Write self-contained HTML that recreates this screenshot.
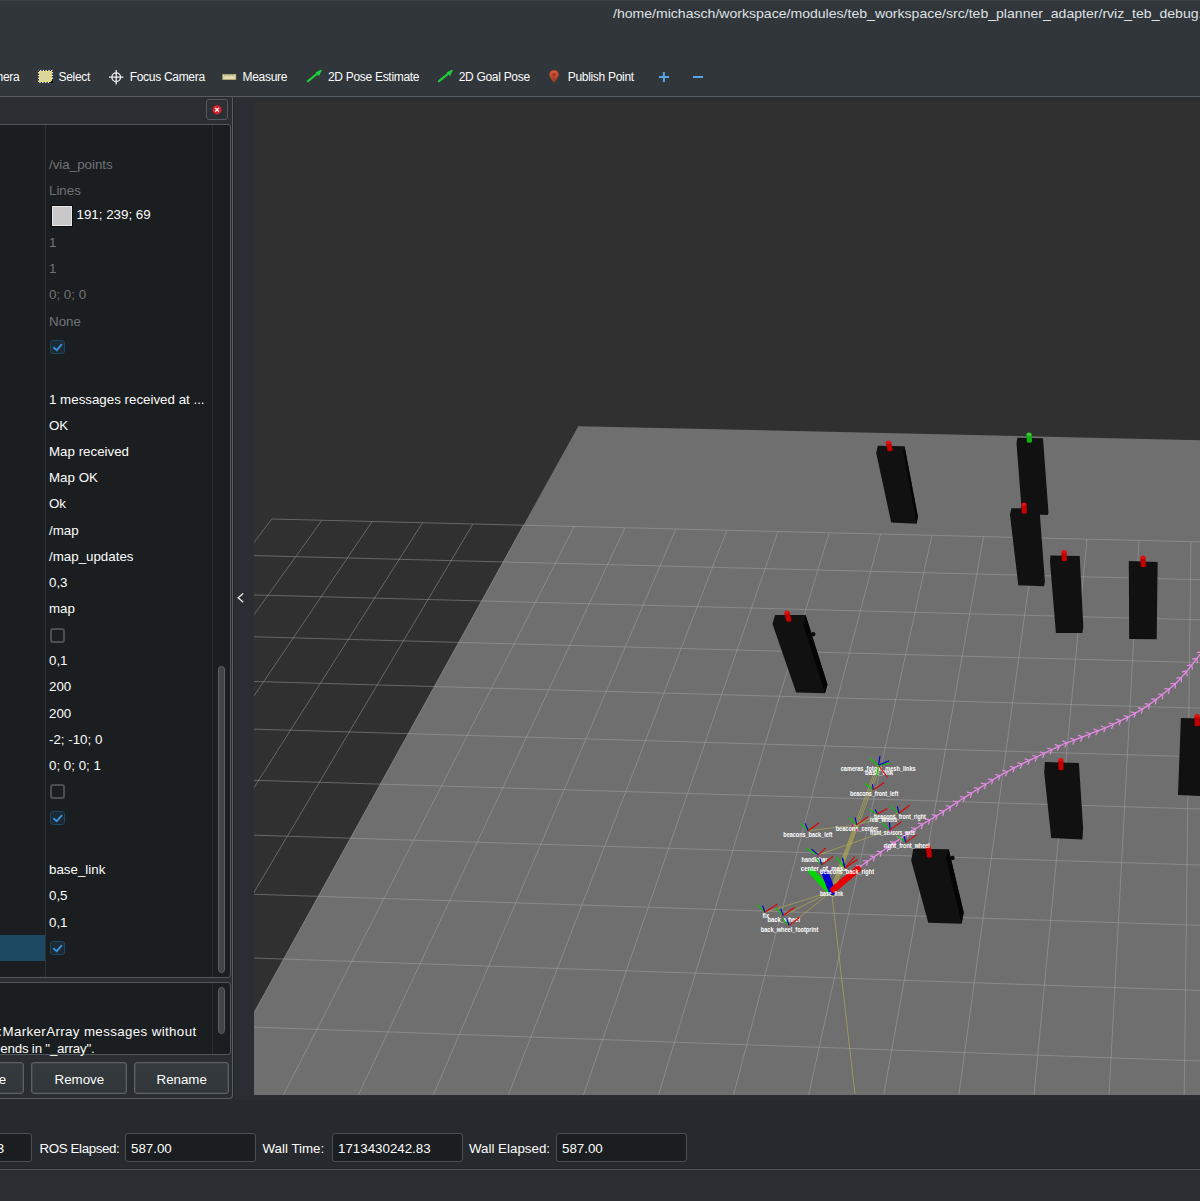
<!DOCTYPE html><html><head><meta charset="utf-8"><style>
*{margin:0;padding:0;box-sizing:border-box}
html,body{width:1200px;height:1201px;overflow:hidden;background:#31363b;font-family:"Liberation Sans", sans-serif;color:#fcfcfc;position:relative}
.a{position:absolute;white-space:nowrap}
</style></head><body><div class="a" style="left:0px;top:0px;width:1200px;height:1px;background:#3c4147"></div>
<div class="a" style="left:613.00px;top:7.75px;font-size:12.2px;line-height:13.63px;color:#dfe1e3;letter-spacing:0px;transform:scaleX(1.154);transform-origin:0 0">/home/michasch/workspace/modules/teb_workspace/src/teb_planner_adapter/rviz_teb_debug.rviz - RViz</div>
<div class="a" style="left:-21.50px;top:70.92px;font-size:12px;line-height:13.40px;color:#fcfcfc;letter-spacing:-0.3px;">Camera</div>
<svg class="a" style="left:37px;top:69px" width="17" height="15"><rect x="1.5" y="1.5" width="14" height="12" fill="#d9d59c"/><rect x="2.6" y="2.6" width="11.8" height="9.8" fill="none" stroke="#ece070" stroke-width="1.1"/><rect x="1.5" y="1.5" width="14" height="12" fill="none" stroke="#e8e8f0" stroke-width="1.1"/><rect x="1.5" y="1.5" width="14" height="12" fill="none" stroke="#141a38" stroke-width="1.1" stroke-dasharray="1.4 1.4"/><path d="M12.5 14L16 14L16 10.5Z" fill="#000"/></svg>
<div class="a" style="left:58.50px;top:70.92px;font-size:12px;line-height:13.40px;color:#fcfcfc;letter-spacing:-0.3px;">Select</div>
<svg class="a" style="left:108px;top:69px" width="17" height="17"><circle cx="8.2" cy="8.2" r="4.3" fill="none" stroke="#f0f0f0" stroke-width="1.3"/><path d="M8.2 1V15.4M1 8.2H15.4" stroke="#f0f0f0" stroke-width="1.3"/></svg>
<div class="a" style="left:129.70px;top:70.92px;font-size:12px;line-height:13.40px;color:#fcfcfc;letter-spacing:-0.3px;">Focus Camera</div>
<svg class="a" style="left:222px;top:73px" width="15" height="8"><rect x="0.8" y="1.5" width="13" height="5" fill="#e6ddb0" stroke="#b8ae80" stroke-width="0.8"/><path d="M3 1.5v2M5 1.5v1.5M7 1.5v2M9 1.5v1.5M11 1.5v2" stroke="#8a8060" stroke-width="0.6"/></svg>
<div class="a" style="left:242.50px;top:70.92px;font-size:12px;line-height:13.40px;color:#fcfcfc;letter-spacing:-0.3px;">Measure</div>
<svg class="a" style="left:306px;top:68px" width="18" height="16"><path d="M2 13.2 L14.5 3" stroke="#1fcf3a" stroke-width="2.2" stroke-linecap="round"/><path d="M15.5 2 L9.5 4.2 L13.2 8.2 Z" fill="#1fcf3a"/></svg>
<svg class="a" style="left:436.7px;top:68px" width="18" height="16"><path d="M2 13.2 L14.5 3" stroke="#1fcf3a" stroke-width="2.2" stroke-linecap="round"/><path d="M15.5 2 L9.5 4.2 L13.2 8.2 Z" fill="#1fcf3a"/></svg>
<div class="a" style="left:328.00px;top:70.92px;font-size:12px;line-height:13.40px;color:#fcfcfc;letter-spacing:-0.3px;">2D Pose Estimate</div>
<div class="a" style="left:458.70px;top:70.92px;font-size:12px;line-height:13.40px;color:#fcfcfc;letter-spacing:-0.3px;">2D Goal Pose</div>
<svg class="a" style="left:548px;top:69px" width="12" height="15"><defs><linearGradient id="pg" x1="0" y1="0" x2="0" y2="1"><stop offset="0" stop-color="#e4583a"/><stop offset="1" stop-color="#8e3a22"/></linearGradient></defs><path d="M6 1.2C3.2 1.2 1.3 3.2 1.3 5.6C1.3 8.6 6 13.8 6 13.8C6 13.8 10.7 8.6 10.7 5.6C10.7 3.2 8.8 1.2 6 1.2Z" fill="url(#pg)"/><circle cx="6" cy="5.4" r="1.5" fill="#8e3a22"/></svg>
<div class="a" style="left:567.70px;top:70.92px;font-size:12px;line-height:13.40px;color:#fcfcfc;letter-spacing:-0.3px;">Publish Point</div>
<svg class="a" style="left:658px;top:71px" width="12" height="12"><path d="M5.9 1v10M1 6h10" stroke="#58a4e8" stroke-width="2"/></svg>
<svg class="a" style="left:692px;top:71px" width="12" height="12"><path d="M1 6h10" stroke="#58a4e8" stroke-width="2"/></svg>
<div class="a" style="left:0px;top:96px;width:1200px;height:1px;background:#575c62"></div>
<div class="a" style="left:0px;top:97px;width:1200px;height:1003px;background:#2a2e32"></div>
<div class="a" style="left:-4px;top:96px;width:237px;height:1003px;border:1px solid #575c61;border-top:none;border-radius:0 3px 4px 4px"></div>
<div class="a" style="left:233px;top:97px;width:1px;height:1001px;background:#23262a"></div>
<div class="a" style="left:206px;top:99px;width:22px;height:21px;border:1.6px solid #55595e;border-radius:3px;background:#2c3034"></div>
<svg class="a" style="left:211px;top:104px" width="12" height="12"><circle cx="6" cy="5.8" r="4.6" fill="#d8232a"/><path d="M4.2 4L7.8 7.6M7.8 4L4.2 7.6" stroke="#fff" stroke-width="1.3"/></svg>
<div class="a" style="left:-4px;top:124px;width:235px;height:854px;border:1px solid #52575c;border-radius:3px;background:#1b1e20"></div>
<div class="a" style="left:45px;top:125px;width:1px;height:852px;background:#2f3336"></div>
<div class="a" style="left:212px;top:125px;width:1px;height:852px;background:#2a2d30"></div>
<div class="a" style="left:0px;top:935px;width:45px;height:26px;background:#1e4962"></div>
<div class="a" style="left:218px;top:666px;width:7px;height:307px;border:1px solid #5b6065;border-radius:4px;background:#40454a"></div>
<div class="a" style="left:49.00px;top:157.80px;font-size:13.33px;line-height:14.89px;color:#6f7377;letter-spacing:0px;">/via_points</div>
<div class="a" style="left:49.00px;top:183.93px;font-size:13.33px;line-height:14.89px;color:#6f7377;letter-spacing:0px;">Lines</div>
<div class="a" style="left:49.00px;top:236.19px;font-size:13.33px;line-height:14.89px;color:#6f7377;letter-spacing:0px;">1</div>
<div class="a" style="left:49.00px;top:262.32px;font-size:13.33px;line-height:14.89px;color:#6f7377;letter-spacing:0px;">1</div>
<div class="a" style="left:49.00px;top:288.45px;font-size:13.33px;line-height:14.89px;color:#6f7377;letter-spacing:0px;">0; 0; 0</div>
<div class="a" style="left:49.00px;top:314.58px;font-size:13.33px;line-height:14.89px;color:#6f7377;letter-spacing:0px;">None</div>
<div class="a" style="left:49.00px;top:392.97px;font-size:13.33px;line-height:14.89px;color:#fcfcfc;letter-spacing:0px;">1 messages received at ...</div>
<div class="a" style="left:49.00px;top:419.10px;font-size:13.33px;line-height:14.89px;color:#fcfcfc;letter-spacing:0px;">OK</div>
<div class="a" style="left:49.00px;top:445.23px;font-size:13.33px;line-height:14.89px;color:#fcfcfc;letter-spacing:0px;">Map received</div>
<div class="a" style="left:49.00px;top:471.36px;font-size:13.33px;line-height:14.89px;color:#fcfcfc;letter-spacing:0px;">Map OK</div>
<div class="a" style="left:49.00px;top:497.49px;font-size:13.33px;line-height:14.89px;color:#fcfcfc;letter-spacing:0px;">Ok</div>
<div class="a" style="left:49.00px;top:523.62px;font-size:13.33px;line-height:14.89px;color:#fcfcfc;letter-spacing:0px;">/map</div>
<div class="a" style="left:49.00px;top:549.75px;font-size:13.33px;line-height:14.89px;color:#fcfcfc;letter-spacing:0px;">/map_updates</div>
<div class="a" style="left:49.00px;top:575.88px;font-size:13.33px;line-height:14.89px;color:#fcfcfc;letter-spacing:0px;">0,3</div>
<div class="a" style="left:49.00px;top:602.01px;font-size:13.33px;line-height:14.89px;color:#fcfcfc;letter-spacing:0px;">map</div>
<div class="a" style="left:49.00px;top:654.27px;font-size:13.33px;line-height:14.89px;color:#fcfcfc;letter-spacing:0px;">0,1</div>
<div class="a" style="left:49.00px;top:680.40px;font-size:13.33px;line-height:14.89px;color:#fcfcfc;letter-spacing:0px;">200</div>
<div class="a" style="left:49.00px;top:706.53px;font-size:13.33px;line-height:14.89px;color:#fcfcfc;letter-spacing:0px;">200</div>
<div class="a" style="left:49.00px;top:732.66px;font-size:13.33px;line-height:14.89px;color:#fcfcfc;letter-spacing:0px;">-2; -10; 0</div>
<div class="a" style="left:49.00px;top:758.79px;font-size:13.33px;line-height:14.89px;color:#fcfcfc;letter-spacing:0px;">0; 0; 0; 1</div>
<div class="a" style="left:49.00px;top:863.31px;font-size:13.33px;line-height:14.89px;color:#fcfcfc;letter-spacing:0px;">base_link</div>
<div class="a" style="left:49.00px;top:889.44px;font-size:13.33px;line-height:14.89px;color:#fcfcfc;letter-spacing:0px;">0,5</div>
<div class="a" style="left:49.00px;top:915.57px;font-size:13.33px;line-height:14.89px;color:#fcfcfc;letter-spacing:0px;">0,1</div>
<div class="a" style="left:51px;top:205px;width:22px;height:22px;border:1px solid #0c0d0e;background:#c8c8c8;box-shadow:inset 0 0 0 1px #e8e8e8"></div>
<div class="a" style="left:76.50px;top:207.80px;font-size:13.33px;line-height:14.89px;color:#fcfcfc;letter-spacing:0px;">191; 239; 69</div>
<div class="a" style="left:50px;top:340.1px;width:15px;height:14px;border:1.5px solid #1e4560;border-radius:3px;background:#1b2a35"></div>
<svg class="a" style="left:50px;top:340.1px" width="15" height="14"><path d="M3.3 7.2L6.7 10.2L12 4.2" fill="none" stroke="#3d8fdc" stroke-width="2"/></svg>
<div class="a" style="left:50px;top:627.5px;width:15px;height:15px;border:2px solid #4b4e52;border-radius:3px"></div>
<div class="a" style="left:50px;top:784.3px;width:15px;height:15px;border:2px solid #4b4e52;border-radius:3px"></div>
<div class="a" style="left:50px;top:810.5px;width:15px;height:14px;border:1.5px solid #1e4560;border-radius:3px;background:#1b2a35"></div>
<svg class="a" style="left:50px;top:810.5px" width="15" height="14"><path d="M3.3 7.2L6.7 10.2L12 4.2" fill="none" stroke="#3d8fdc" stroke-width="2"/></svg>
<div class="a" style="left:50px;top:941.1px;width:15px;height:14px;border:1.5px solid #1e4560;border-radius:3px;background:#1b2a35"></div>
<svg class="a" style="left:50px;top:941.1px" width="15" height="14"><path d="M3.3 7.2L6.7 10.2L12 4.2" fill="none" stroke="#3d8fdc" stroke-width="2"/></svg>
<div class="a" style="left:-4px;top:982px;width:235px;height:73px;border:1px solid #52575c;border-radius:3px;background:#1b1e20"></div>
<div class="a" style="left:212px;top:983px;width:1px;height:71px;background:#2a2d30"></div>
<div class="a" style="left:218px;top:987px;width:7px;height:47px;border:1px solid #5b6065;border-radius:4px;background:#40454a"></div>
<div class="a" style="left:-300px;width:496.5px;top:1024.8px;font-size:13.33px;line-height:14.89px;text-align:right;letter-spacing:0.37px">visualization_msgs::MarkerArray messages without</div>
<div class="a" style="left:-300px;width:394.5px;top:1041.8px;font-size:13.33px;line-height:14.89px;text-align:right;letter-spacing:-0.2px">whose topic ends in "_array".</div>
<div class="a" style="left:-72px;top:1062px;width:96px;height:32px;border:1px solid #5c6166;box-shadow:inset 0 0 0 0.6px #4a4f54;border-radius:3px;background:linear-gradient(#353a3f,#31363b)"></div>
<div class="a" style="left:31px;top:1062px;width:96px;height:32px;border:1px solid #5c6166;box-shadow:inset 0 0 0 0.6px #4a4f54;border-radius:3px;background:linear-gradient(#353a3f,#31363b)"></div>
<div class="a" style="left:134px;top:1062px;width:95px;height:32px;border:1px solid #5c6166;box-shadow:inset 0 0 0 0.6px #4a4f54;border-radius:3px;background:linear-gradient(#353a3f,#31363b)"></div>
<div class="a" style="left:-49.50px;top:1072.80px;font-size:13.33px;line-height:14.89px;color:#fcfcfc;letter-spacing:0px;">Duplicate</div>
<div class="a" style="left:54.50px;top:1072.80px;font-size:13.33px;line-height:14.89px;color:#fcfcfc;letter-spacing:0px;">Remove</div>
<div class="a" style="left:156.50px;top:1072.80px;font-size:13.33px;line-height:14.89px;color:#fcfcfc;letter-spacing:0px;">Rename</div>
<svg class="a" style="left:235px;top:590px" width="12" height="16"><path d="M8.2 3.5L3.2 7.8L8.2 12.2" fill="none" stroke="#e6e6e6" stroke-width="1.4"/></svg>
<div class="a" style="left:0px;top:1100px;width:1200px;height:68px;background:#26292d"></div>
<div class="a" style="left:0px;top:1168px;width:1200px;height:1px;background:#1f2225"></div>
<div class="a" style="left:0px;top:1169px;width:1200px;height:1px;background:#50555a"></div>
<div class="a" style="left:0px;top:1170px;width:1200px;height:31px;background:#2a2e32"></div>
<div class="a" style="left:-100px;top:1133px;width:132px;height:29px;border:1px solid #4a4f54;border-radius:3px;background:#1b1e20"></div>
<div class="a" style="left:-88.50px;top:1141.80px;font-size:13.33px;line-height:14.89px;color:#fcfcfc;letter-spacing:0px;">1713430242.83</div>
<div class="a" style="left:39.50px;top:1141.80px;font-size:13.33px;line-height:14.89px;color:#fcfcfc;letter-spacing:-0.38px;">ROS Elapsed:</div>
<div class="a" style="left:125px;top:1133px;width:131px;height:29px;border:1px solid #4a4f54;border-radius:3px;background:#1b1e20"></div>
<div class="a" style="left:131.00px;top:1141.80px;font-size:13.33px;line-height:14.89px;color:#fcfcfc;letter-spacing:0px;">587.00</div>
<div class="a" style="left:262.50px;top:1141.80px;font-size:13.33px;line-height:14.89px;color:#fcfcfc;letter-spacing:0px;">Wall Time:</div>
<div class="a" style="left:332px;top:1133px;width:131px;height:29px;border:1px solid #4a4f54;border-radius:3px;background:#1b1e20"></div>
<div class="a" style="left:338.00px;top:1141.80px;font-size:13.33px;line-height:14.89px;color:#fcfcfc;letter-spacing:0px;">1713430242.83</div>
<div class="a" style="left:469.00px;top:1141.80px;font-size:13.33px;line-height:14.89px;color:#fcfcfc;letter-spacing:0px;">Wall Elapsed:</div>
<div class="a" style="left:556px;top:1133px;width:131px;height:29px;border:1px solid #4a4f54;border-radius:3px;background:#1b1e20"></div>
<div class="a" style="left:562.00px;top:1141.80px;font-size:13.33px;line-height:14.89px;color:#fcfcfc;letter-spacing:0px;">587.00</div>
<svg class="a" style="left:254px;top:102px" width="946" height="993" viewBox="0 0 946 993"><rect x="0" y="0" width="946" height="993" fill="#303030"/><defs><clipPath id="mc"><path d="M324.28,324.14L2015.27,362.21L3856.89,2395.89L-664.82,2112.85Z"/></clipPath></defs><path d="M17.81,417.01L2111.71,468.70M-9.84,453.35L2147.62,508.36M-39.16,491.91L2185.82,550.55M-70.34,532.89L2226.55,595.52M-103.53,576.53L2270.06,643.57M-138.95,623.10L2316.64,695.01M-176.84,672.91L2366.64,750.23M-217.44,726.30L2420.45,809.64M-261.08,783.67L2478.50,873.75M-308.10,845.48L2541.35,943.15M-358.91,912.28L2609.58,1018.50M-413.99,984.70L2683.94,1100.62M-473.90,1063.46L2765.29,1190.45M-539.30,1149.44L2854.66,1289.14M-610.99,1243.70L2953.29,1398.06M-689.92,1347.47L3062.72,1518.89M-777.24,1462.27L3184.80,1653.71M-874.37,1589.97L3321.87,1805.08M-983.06,1732.86L3476.88,1976.25M-1105.50,1893.84L3653.58,2171.38M-1244.48,2076.56L3856.89,2395.89M17.81,417.01L-1244.48,2076.56M67.92,418.24L-1129.74,2083.74M118.15,419.48L-1014.41,2090.96M168.49,420.73L-898.48,2098.22M218.93,421.97L-781.95,2105.51M269.49,423.22L-664.82,2112.85M320.16,424.47L-547.08,2120.22M370.94,425.72L-428.72,2127.63M421.83,426.98L-309.74,2135.07M472.83,428.24L-190.13,2142.56M523.95,429.50L-69.90,2150.09M575.18,430.77L50.97,2157.65M626.52,432.03L172.48,2165.26M677.98,433.30L294.64,2172.90M729.55,434.58L417.44,2180.59M781.24,435.85L540.91,2188.32M833.04,437.13L665.03,2196.09M884.95,438.41L789.81,2203.90M936.98,439.70L915.27,2211.75M989.13,440.99L1041.41,2219.65M1041.39,442.28L1168.23,2227.59M1093.77,443.57L1295.73,2235.57M1146.27,444.87L1423.93,2243.59M1198.88,446.17L1552.83,2251.66M1251.61,447.47L1682.43,2259.78M1304.47,448.77L1812.75,2267.93M1357.44,450.08L1943.78,2276.14M1410.52,451.39L2075.53,2284.38M1463.73,452.70L2208.01,2292.68M1517.06,454.02L2341.23,2301.01M1570.51,455.34L2475.19,2309.40M1624.08,456.66L2609.89,2317.83M1677.77,457.99L2745.35,2326.31M1731.58,459.32L2881.56,2334.84M1785.52,460.65L3018.55,2343.41M1839.57,461.98L3156.30,2352.04M1893.75,463.32L3294.83,2360.71M1948.05,464.66L3434.15,2369.43M2002.48,466.01L3574.26,2378.20M2057.03,467.35L3715.17,2387.02M2111.71,468.70L3856.89,2395.89" stroke="#a0a0a4" stroke-opacity="0.48" stroke-width="1" fill="none"/><path d="M324.28,324.14L2015.27,362.21L3856.89,2395.89L-664.82,2112.85Z" fill="#6f6f6f"/><path d="M17.81,417.01L2111.71,468.70M-9.84,453.35L2147.62,508.36M-39.16,491.91L2185.82,550.55M-70.34,532.89L2226.55,595.52M-103.53,576.53L2270.06,643.57M-138.95,623.10L2316.64,695.01M-176.84,672.91L2366.64,750.23M-217.44,726.30L2420.45,809.64M-261.08,783.67L2478.50,873.75M-308.10,845.48L2541.35,943.15M-358.91,912.28L2609.58,1018.50M-413.99,984.70L2683.94,1100.62M-473.90,1063.46L2765.29,1190.45M-539.30,1149.44L2854.66,1289.14M-610.99,1243.70L2953.29,1398.06M-689.92,1347.47L3062.72,1518.89M-777.24,1462.27L3184.80,1653.71M-874.37,1589.97L3321.87,1805.08M-983.06,1732.86L3476.88,1976.25M-1105.50,1893.84L3653.58,2171.38M-1244.48,2076.56L3856.89,2395.89M17.81,417.01L-1244.48,2076.56M67.92,418.24L-1129.74,2083.74M118.15,419.48L-1014.41,2090.96M168.49,420.73L-898.48,2098.22M218.93,421.97L-781.95,2105.51M269.49,423.22L-664.82,2112.85M320.16,424.47L-547.08,2120.22M370.94,425.72L-428.72,2127.63M421.83,426.98L-309.74,2135.07M472.83,428.24L-190.13,2142.56M523.95,429.50L-69.90,2150.09M575.18,430.77L50.97,2157.65M626.52,432.03L172.48,2165.26M677.98,433.30L294.64,2172.90M729.55,434.58L417.44,2180.59M781.24,435.85L540.91,2188.32M833.04,437.13L665.03,2196.09M884.95,438.41L789.81,2203.90M936.98,439.70L915.27,2211.75M989.13,440.99L1041.41,2219.65M1041.39,442.28L1168.23,2227.59M1093.77,443.57L1295.73,2235.57M1146.27,444.87L1423.93,2243.59M1198.88,446.17L1552.83,2251.66M1251.61,447.47L1682.43,2259.78M1304.47,448.77L1812.75,2267.93M1357.44,450.08L1943.78,2276.14M1410.52,451.39L2075.53,2284.38M1463.73,452.70L2208.01,2292.68M1517.06,454.02L2341.23,2301.01M1570.51,455.34L2475.19,2309.40M1624.08,456.66L2609.89,2317.83M1677.77,457.99L2745.35,2326.31M1731.58,459.32L2881.56,2334.84M1785.52,460.65L3018.55,2343.41M1839.57,461.98L3156.30,2352.04M1893.75,463.32L3294.83,2360.71M1948.05,464.66L3434.15,2369.43M2002.48,466.01L3574.26,2378.20M2057.03,467.35L3715.17,2387.02M2111.71,468.70L3856.89,2395.89" stroke="#a0a0a4" stroke-opacity="0.55" stroke-width="1" fill="none" clip-path="url(#mc)"/></svg>
<svg class="a" style="left:254px;top:102px" width="946" height="993" viewBox="254 102 946 993"><polygon points="1017.4,437.8 1043,438.2 1048.5,512.9 1047.6,515.1 1022,514 1016.5,443.3" fill="#111111" /><line x1="1029" y1="434.3" x2="1029.5" y2="441.5" stroke="#10b010" stroke-width="5.2" stroke-linecap="butt"/><ellipse cx="1029.5" cy="441.5" rx="2.6" ry="1.3" fill="#10b010"/><ellipse cx="1029" cy="434.3" rx="2.6" ry="1.7" fill="#30d030"/><polygon points="877.9,445.8 904.5,446.2 917.9,516.6 916.6,523.7 891.2,522.4 876.2,452.9" fill="#111111" /><polygon points="904.5,446.2 917.9,516.6 916.6,523.7 903.3,451.6" fill="#050505" /><line x1="888.5" y1="442.3" x2="890" y2="450" stroke="#c20000" stroke-width="5.2" stroke-linecap="butt"/><ellipse cx="890" cy="450" rx="2.6" ry="1.3" fill="#c20000"/><ellipse cx="888.5" cy="442.3" rx="2.6" ry="1.7" fill="#e41010"/><polygon points="1011.4,508.3 1039.4,508.3 1044.9,581.6 1044,586.2 1018.3,585.3 1010,514.7" fill="#111111" /><line x1="1024" y1="504.3" x2="1024.3" y2="512.5" stroke="#c20000" stroke-width="5.2" stroke-linecap="butt"/><ellipse cx="1024.3" cy="512.5" rx="2.6" ry="1.3" fill="#c20000"/><ellipse cx="1024" cy="504.3" rx="2.6" ry="1.7" fill="#e41010"/><polygon points="1050.4,555.4 1079.7,556 1083.3,626.5 1082.4,633 1055.9,633 1050,561.4" fill="#111111" /><line x1="1064" y1="551.8" x2="1064.3" y2="560" stroke="#c20000" stroke-width="5.2" stroke-linecap="butt"/><ellipse cx="1064.3" cy="560" rx="2.6" ry="1.3" fill="#c20000"/><ellipse cx="1064" cy="551.8" rx="2.6" ry="1.7" fill="#e41010"/><polygon points="1128.8,561 1157.6,561.9 1157.6,565.1 1156.7,639.3 1129.2,638.9" fill="#111111" /><line x1="1143" y1="557.3" x2="1143.3" y2="566" stroke="#c20000" stroke-width="5.2" stroke-linecap="butt"/><ellipse cx="1143.3" cy="566" rx="2.6" ry="1.3" fill="#c20000"/><ellipse cx="1143" cy="557.3" rx="2.6" ry="1.7" fill="#e41010"/><circle cx="813.3" cy="634.1" r="2.2" fill="#0a0a0a"/><polygon points="775,615 805.6,615 827.4,684.5 825,693.3 796.2,692.4 772.5,624.1" fill="#111111" /><polygon points="805.6,615 827.4,684.5 825,693.3 803.3,625" fill="#050505" /><line x1="786.8" y1="612.3" x2="789" y2="620.5" stroke="#c20000" stroke-width="5.2" stroke-linecap="butt"/><ellipse cx="789" cy="620.5" rx="2.6" ry="1.3" fill="#c20000"/><ellipse cx="786.8" cy="612.3" rx="2.6" ry="1.7" fill="#e41010"/><polygon points="1180.9,718.1 1200,718.4 1200,796 1178,794.9" fill="#111111" /><line x1="1197" y1="715.8" x2="1197.3" y2="725" stroke="#c20000" stroke-width="5.2" stroke-linecap="butt"/><ellipse cx="1197.3" cy="725" rx="2.6" ry="1.3" fill="#c20000"/><ellipse cx="1197" cy="715.8" rx="2.6" ry="1.7" fill="#e41010"/><polygon points="1044.9,762 1078.9,763 1083.1,828.2 1082.4,839.5 1051.2,838.1 1044.2,772.2" fill="#111111" /><line x1="1060.8" y1="759.8" x2="1061" y2="769" stroke="#c20000" stroke-width="5.2" stroke-linecap="butt"/><ellipse cx="1061" cy="769" rx="2.6" ry="1.3" fill="#c20000"/><ellipse cx="1060.8" cy="759.8" rx="2.6" ry="1.7" fill="#e41010"/><circle cx="952.5" cy="857.9" r="2.2" fill="#0a0a0a"/><polygon points="913.3,848.7 948.7,849.2 963.7,912.4 961.6,923.7 928.3,922.8 911.2,860.4" fill="#111111" /><polygon points="948.7,849.2 963.7,912.4 961.6,923.7 946,858" fill="#050505" /><line x1="928.3" y1="847.3" x2="929.5" y2="856.5" stroke="#c20000" stroke-width="5.2" stroke-linecap="butt"/><ellipse cx="929.5" cy="856.5" rx="2.6" ry="1.3" fill="#c20000"/><ellipse cx="928.3" cy="847.3" rx="2.6" ry="1.7" fill="#e41010"/><polyline points="856.0,869.5 857.2,868.7 858.7,867.5 860.6,866.2 862.7,864.8 864.9,863.2 867.1,861.6 869.4,860.0 871.5,858.5 873.6,857.0 875.8,855.6 878.0,854.1 880.2,852.5 882.4,851.0 884.6,849.5 886.8,848.0 889.0,846.5 891.1,845.0 893.2,843.6 895.2,842.1 897.2,840.7 899.3,839.3 901.3,837.8 903.4,836.4 905.5,835.0 907.6,833.6 909.8,832.2 912.0,830.8 914.2,829.4 916.5,828.0 918.7,826.7 920.9,825.3 923.0,824.0 925.1,822.7 927.2,821.5 929.3,820.2 931.3,819.0 933.4,817.8 935.4,816.5 937.4,815.3 939.5,814.0 941.6,812.7 943.6,811.3 945.7,809.9 947.8,808.5 949.8,807.1 951.9,805.7 953.9,804.4 956.0,803.0 958.1,801.7 960.1,800.3 962.2,799.0 964.3,797.7 966.3,796.4 968.4,795.1 970.5,793.8 972.5,792.5 974.5,791.2 976.5,790.0 978.5,788.7 980.5,787.4 982.5,786.2 984.5,785.0 986.5,783.7 988.5,782.5 990.5,781.3 992.5,780.1 994.5,778.8 996.5,777.6 998.5,776.4 1000.5,775.3 1002.5,774.1 1004.5,773.0 1006.4,772.0 1008.2,771.0 1010.0,770.1 1011.7,769.1 1013.6,768.2 1015.5,767.2 1017.6,766.2 1020.0,765.0 1022.7,763.7 1025.6,762.2 1028.8,760.7 1032.0,759.1 1035.3,757.6 1038.5,756.0 1041.5,754.6 1044.2,753.3 1046.6,752.1 1048.9,751.0 1051.0,750.0 1053.0,749.0 1055.0,748.1 1056.9,747.2 1058.8,746.3 1060.8,745.4 1062.8,744.5 1064.8,743.7 1066.8,743.0 1068.8,742.2 1070.8,741.5 1072.7,740.7 1074.7,740.0 1076.7,739.2 1078.7,738.4 1080.7,737.6 1082.6,736.8 1084.6,736.1 1086.6,735.3 1088.6,734.5 1090.5,733.7 1092.5,732.9 1094.5,732.1 1096.4,731.4 1098.4,730.6 1100.4,729.8 1102.3,729.1 1104.2,728.3 1106.1,727.5 1108.0,726.7 1109.8,725.9 1111.6,725.1 1113.4,724.2 1115.1,723.4 1116.8,722.6 1118.5,721.7 1120.3,720.9 1122.0,720.0 1123.7,719.1 1125.5,718.3 1127.2,717.4 1128.9,716.6 1130.6,715.7 1132.3,714.8 1134.1,713.9 1135.8,712.9 1137.6,711.9 1139.3,710.9 1141.1,709.8 1142.8,708.7 1144.6,707.6 1146.4,706.4 1148.2,705.2 1150.0,704.0 1151.8,702.7 1153.7,701.4 1155.6,700.0 1157.5,698.5 1159.3,697.1 1161.2,695.6 1163.1,694.1 1165.0,692.5 1166.8,691.0 1168.6,689.5 1170.4,688.1 1172.2,686.6 1174.0,685.0 1175.9,683.2 1177.9,681.2 1180.0,679.0 1182.3,676.4 1184.8,673.5 1187.5,670.3 1190.2,666.9 1192.9,663.6 1195.4,660.3 1197.8,657.3 1200.0,654.5 1202.0,651.9 1203.8,649.4 1205.6,647.0 1207.2,644.7 1208.7,642.6 1210.0,640.8 1211.1,639.2 1212.0,638.0" fill="none" stroke="#e68ae6" stroke-width="1.3"/><path d="M860.9,866.0l-5.0,-0.6M860.9,866.0l-1.0,4.9M867.6,861.2l-5.0,-0.7M867.6,861.2l-1.0,4.9M874.5,856.5l-4.9,-0.7M874.5,856.5l-1.1,4.9M881.3,851.8l-4.9,-0.8M881.3,851.8l-1.1,4.9M888.2,847.1l-4.9,-0.7M888.2,847.1l-1.1,4.9M895.0,842.3l-5.0,-0.7M895.0,842.3l-1.0,4.9M901.7,837.5l-4.9,-0.7M901.7,837.5l-1.1,4.9M908.7,832.9l-4.9,-0.9M908.7,832.9l-1.2,4.8M915.7,828.5l-4.9,-1.0M915.7,828.5l-1.3,4.8M922.7,824.2l-4.9,-1.0M922.7,824.2l-1.3,4.8M929.8,819.9l-4.9,-1.1M929.8,819.9l-1.4,4.8M937.0,815.6l-4.9,-1.0M937.0,815.6l-1.3,4.8M943.9,811.1l-4.9,-0.8M943.9,811.1l-1.1,4.9M950.8,806.5l-4.9,-0.8M950.8,806.5l-1.1,4.9M957.7,801.9l-4.9,-0.9M957.7,801.9l-1.2,4.8M964.7,797.4l-4.9,-0.9M964.7,797.4l-1.3,4.8M971.7,793.0l-4.9,-0.9M971.7,793.0l-1.3,4.8M978.8,788.5l-4.9,-0.9M978.8,788.5l-1.3,4.8M985.8,784.2l-4.9,-1.0M985.8,784.2l-1.3,4.8M992.9,779.8l-4.9,-1.0M992.9,779.8l-1.4,4.8M1000.0,775.6l-4.9,-1.1M1000.0,775.6l-1.4,4.8M1007.2,771.5l-4.8,-1.3M1007.2,771.5l-1.6,4.7M1014.6,767.7l-4.8,-1.4M1014.6,767.7l-1.7,4.7M1022.0,764.0l-4.8,-1.4M1022.0,764.0l-1.8,4.7M1029.5,760.4l-4.8,-1.5M1029.5,760.4l-1.8,4.7M1037.0,756.8l-4.8,-1.5M1037.0,756.8l-1.8,4.7M1044.5,753.2l-4.8,-1.5M1044.5,753.2l-1.8,4.7M1051.9,749.5l-4.8,-1.5M1051.9,749.5l-1.8,4.7M1059.4,746.0l-4.7,-1.6M1059.4,746.0l-2.0,4.6M1067.1,742.8l-4.6,-1.9M1067.1,742.8l-2.2,4.5M1074.9,739.9l-4.6,-1.9M1074.9,739.9l-2.2,4.5M1082.6,736.9l-4.7,-1.8M1082.6,736.9l-2.1,4.5M1090.3,733.8l-4.7,-1.8M1090.3,733.8l-2.1,4.5M1098.0,730.7l-4.6,-1.8M1098.0,730.7l-2.2,4.5M1105.7,727.7l-4.7,-1.7M1105.7,727.7l-2.0,4.6M1113.3,724.3l-4.8,-1.5M1113.3,724.3l-1.8,4.7M1120.8,720.6l-4.8,-1.4M1120.8,720.6l-1.8,4.7M1128.2,716.9l-4.8,-1.4M1128.2,716.9l-1.7,4.7M1135.5,713.0l-4.9,-1.1M1135.5,713.0l-1.5,4.8M1142.7,708.8l-4.9,-0.9M1142.7,708.8l-1.3,4.8M1149.6,704.3l-5.0,-0.7M1149.6,704.3l-1.0,4.9M1156.3,699.4l-5.0,-0.5M1156.3,699.4l-0.9,4.9M1162.9,694.3l-5.0,-0.3M1162.9,694.3l-0.7,5.0M1169.3,689.0l-5.0,-0.3M1169.3,689.0l-0.7,5.0M1175.5,683.5l-5.0,0.1M1175.5,683.5l-0.3,5.0M1181.3,677.6l-5.0,0.5M1181.3,677.6l0.1,5.0M1186.7,671.2l-5.0,0.6M1186.7,671.2l0.3,5.0M1191.9,664.8l-4.9,0.7M1191.9,664.8l0.4,5.0M1197.0,658.3l-4.9,0.8M1197.0,658.3l0.4,5.0M1202.1,651.7l-4.9,0.9M1202.1,651.7l0.5,5.0M1207.0,645.0l-4.9,1.0M1207.0,645.0l0.7,5.0M1211.8,638.3l-4.9,1.0M1211.8,638.3l0.6,5.0" stroke="#e68ae6" stroke-width="1.2" fill="none"/><path d="M829.8000000000001,891.5L877.2,765M831.6,891.5L879.0,765M833.4,891.5L880.8,765M830.7,891.5L855.7,824.9M832.5,891.5L857.5,824.9M831.6,891.5L765.0,912.3M831.6,891.5L783.3,915.7M831.6,891.5L789.1,925.6M831.6,891.5L855.0,1094M831.6,891.5L844.9,868.2M808.3,830.7L856.6,824.9M856.6,824.9L899,813.3M818.3,854.9L889.9,829.9M856.6,824.9L877.4,814.1" stroke="#bdb84a" stroke-opacity="0.7" stroke-width="0.8" fill="none"/><path d="M830.5,892L811.3,871.5" stroke="#00d800" stroke-width="6" stroke-linecap="round"/><path d="M832,891.5L825.5,874" stroke="#0000d0" stroke-width="7" stroke-linecap="round"/><path d="M833.5,889.5L857.8,869.2" stroke="#e60000" stroke-width="6.5" stroke-linecap="round"/><text x="840.7" y="771.2" font-family="Liberation Sans" font-size="6.6" font-weight="bold" fill="#ffffff" textLength="75.0" lengthAdjust="spacingAndGlyphs">cameras_fotom_mesh_links</text><text x="864.9" y="775.1" font-family="Liberation Sans" font-size="6.6" font-weight="bold" fill="#ffffff" textLength="28.300000000000068" lengthAdjust="spacingAndGlyphs">base_link</text><text x="850" y="795.6" font-family="Liberation Sans" font-size="6.6" font-weight="bold" fill="#ffffff" textLength="48.200000000000045" lengthAdjust="spacingAndGlyphs">beacons_front_left</text><text x="874" y="819.2" font-family="Liberation Sans" font-size="6.6" font-weight="bold" fill="#ffffff" textLength="51.700000000000045" lengthAdjust="spacingAndGlyphs">beacons_front_right</text><text x="870" y="822.1" font-family="Liberation Sans" font-size="6.6" font-weight="bold" fill="#ffffff" textLength="27" lengthAdjust="spacingAndGlyphs">rear_wheels</text><text x="835.7" y="830.8000000000001" font-family="Liberation Sans" font-size="6.6" font-weight="bold" fill="#ffffff" textLength="42.5" lengthAdjust="spacingAndGlyphs">beacons_center</text><text x="870" y="835.0" font-family="Liberation Sans" font-size="6.6" font-weight="bold" fill="#ffffff" textLength="44.799999999999955" lengthAdjust="spacingAndGlyphs">front_sensors_axis</text><text x="783.3" y="836.6" font-family="Liberation Sans" font-size="6.6" font-weight="bold" fill="#ffffff" textLength="49.10000000000002" lengthAdjust="spacingAndGlyphs">beacons_back_left</text><text x="884" y="848.3000000000001" font-family="Liberation Sans" font-size="6.6" font-weight="bold" fill="#ffffff" textLength="45.799999999999955" lengthAdjust="spacingAndGlyphs">right_front_wheel</text><text x="801.6" y="861.6" font-family="Liberation Sans" font-size="6.6" font-weight="bold" fill="#ffffff" textLength="25.799999999999955" lengthAdjust="spacingAndGlyphs">handlebar</text><text x="800.8" y="870.8000000000001" font-family="Liberation Sans" font-size="6.6" font-weight="bold" fill="#ffffff" textLength="45.80000000000007" lengthAdjust="spacingAndGlyphs">center_of_mass</text><text x="820" y="874.1" font-family="Liberation Sans" font-size="6.6" font-weight="bold" fill="#ffffff" textLength="54" lengthAdjust="spacingAndGlyphs">beacons_back_right</text><text x="820" y="895.5" font-family="Liberation Sans" font-size="6.6" font-weight="bold" fill="#ffffff" textLength="23.200000000000045" lengthAdjust="spacingAndGlyphs">base_link</text><text x="762.5" y="918.3000000000001" font-family="Liberation Sans" font-size="6.6" font-weight="bold" fill="#ffffff" textLength="6.5" lengthAdjust="spacingAndGlyphs">fix</text><text x="767.5" y="921.6" font-family="Liberation Sans" font-size="6.6" font-weight="bold" fill="#ffffff" textLength="32.5" lengthAdjust="spacingAndGlyphs">back_wheel</text><text x="760.8" y="931.6" font-family="Liberation Sans" font-size="6.6" font-weight="bold" fill="#ffffff" textLength="57.5" lengthAdjust="spacingAndGlyphs">back_wheel_footprint</text><path d="M878.5,765.2L869.2,758.3" stroke="#00c800" stroke-width="1.1"/><path d="M878.5,765.2L880,755.8" stroke="#0000d0" stroke-width="1.1"/><path d="M878.5,765.2L887.5,777.5" stroke="#e00000" stroke-width="1.1"/><path d="M878.5,765.2L890,763.3" stroke="#00c800" stroke-width="1.1"/><path d="M878.5,765.2L889.2,760.8" stroke="#0000d0" stroke-width="1.1"/><path d="M878.5,765.2L878.5,765.2" stroke="#e00000" stroke-width="1.1"/><path d="M878.5,765.2L876.7,775.8" stroke="#00c800" stroke-width="1.1"/><path d="M878.5,765.2L878.5,765.2" stroke="#0000d0" stroke-width="1.1"/><path d="M878.5,765.2L878.5,765.2" stroke="#e00000" stroke-width="1.1"/><path d="M873.2,790L864.9,783.3" stroke="#00c800" stroke-width="1.1"/><path d="M873.2,790L872.4,784.1" stroke="#0000d0" stroke-width="1.1"/><path d="M873.2,790L884,782.5" stroke="#e00000" stroke-width="1.1"/><path d="M856.6,824.9L849,818" stroke="#00c800" stroke-width="1.1"/><path d="M856.6,824.9L855.2,817.4" stroke="#0000d0" stroke-width="1.1"/><path d="M856.6,824.9L868.2,816.6" stroke="#e00000" stroke-width="1.1"/><path d="M877.4,814.1L869.1,809.1" stroke="#00c800" stroke-width="1.1"/><path d="M877.4,814.1L875.2,809.6" stroke="#0000d0" stroke-width="1.1"/><path d="M877.4,814.1L887.4,808.6" stroke="#e00000" stroke-width="1.1"/><path d="M899,813.3L890.7,805.8" stroke="#00c800" stroke-width="1.1"/><path d="M899,813.3L897.3,806.3" stroke="#0000d0" stroke-width="1.1"/><path d="M899,813.3L909.8,805" stroke="#e00000" stroke-width="1.1"/><path d="M889.9,829.9L881.5,822.4" stroke="#00c800" stroke-width="1.1"/><path d="M889.9,829.9L889.5,822.4" stroke="#0000d0" stroke-width="1.1"/><path d="M889.9,829.9L901.8,821.6" stroke="#e00000" stroke-width="1.1"/><path d="M905.7,842.4L897.4,835.7" stroke="#00c800" stroke-width="1.1"/><path d="M905.7,842.4L904,836.2" stroke="#0000d0" stroke-width="1.1"/><path d="M905.7,842.4L916.5,834.9" stroke="#e00000" stroke-width="1.1"/><path d="M808.3,830.7L800,823.2" stroke="#00c800" stroke-width="1.1"/><path d="M808.3,830.7L805,823.2" stroke="#0000d0" stroke-width="1.1"/><path d="M808.3,830.7L819.1,822.7" stroke="#e00000" stroke-width="1.1"/><path d="M818.3,854.9L805.8,848.2" stroke="#00c800" stroke-width="1.1"/><path d="M818.3,854.9L811.6,849.1" stroke="#0000d0" stroke-width="1.1"/><path d="M818.3,854.9L825.8,847.9" stroke="#e00000" stroke-width="1.1"/><path d="M821.6,864.9L816.6,858.5" stroke="#00c800" stroke-width="1.1"/><path d="M821.6,864.9L820,858.5" stroke="#0000d0" stroke-width="1.1"/><path d="M821.6,864.9L832.9,856.5" stroke="#e00000" stroke-width="1.1"/><path d="M844.9,868.2L836.6,857.4" stroke="#00c800" stroke-width="1.1"/><path d="M844.9,868.2L842.4,857.9" stroke="#0000d0" stroke-width="1.1"/><path d="M844.9,868.2L854.9,856.5" stroke="#e00000" stroke-width="1.1"/><path d="M844.9,868.2L836.6,857.4" stroke="#00c800" stroke-width="1.1"/><path d="M844.9,868.2L842.4,857.9" stroke="#0000d0" stroke-width="1.1"/><path d="M844.9,868.2L857.4,859.5" stroke="#e00000" stroke-width="1.1"/><path d="M765,912.3L757.5,904.8" stroke="#00c800" stroke-width="1.1"/><path d="M765,912.3L762.5,905.7" stroke="#0000d0" stroke-width="1.1"/><path d="M765,912.3L777.5,904" stroke="#e00000" stroke-width="1.1"/><path d="M783.3,915.7L775.8,908.2" stroke="#00c800" stroke-width="1.1"/><path d="M783.3,915.7L780.8,909" stroke="#0000d0" stroke-width="1.1"/><path d="M783.3,915.7L794.6,907.3" stroke="#e00000" stroke-width="1.1"/><path d="M789.1,925.6L782.5,919" stroke="#00c800" stroke-width="1.1"/><path d="M789.1,925.6L786.6,918.2" stroke="#0000d0" stroke-width="1.1"/><path d="M789.1,925.6L799.6,917.3" stroke="#e00000" stroke-width="1.1"/><circle cx="852.5" cy="825.7" r="1" fill="#d020a0"/><circle cx="863.2" cy="825" r="1" fill="#d020a0"/><circle cx="856.6" cy="830" r="1" fill="#d020a0"/><circle cx="818" cy="856" r="1" fill="#d020a0"/><circle cx="830" cy="868" r="1" fill="#d020a0"/><circle cx="890" cy="831" r="1" fill="#d020a0"/></svg></body></html>
